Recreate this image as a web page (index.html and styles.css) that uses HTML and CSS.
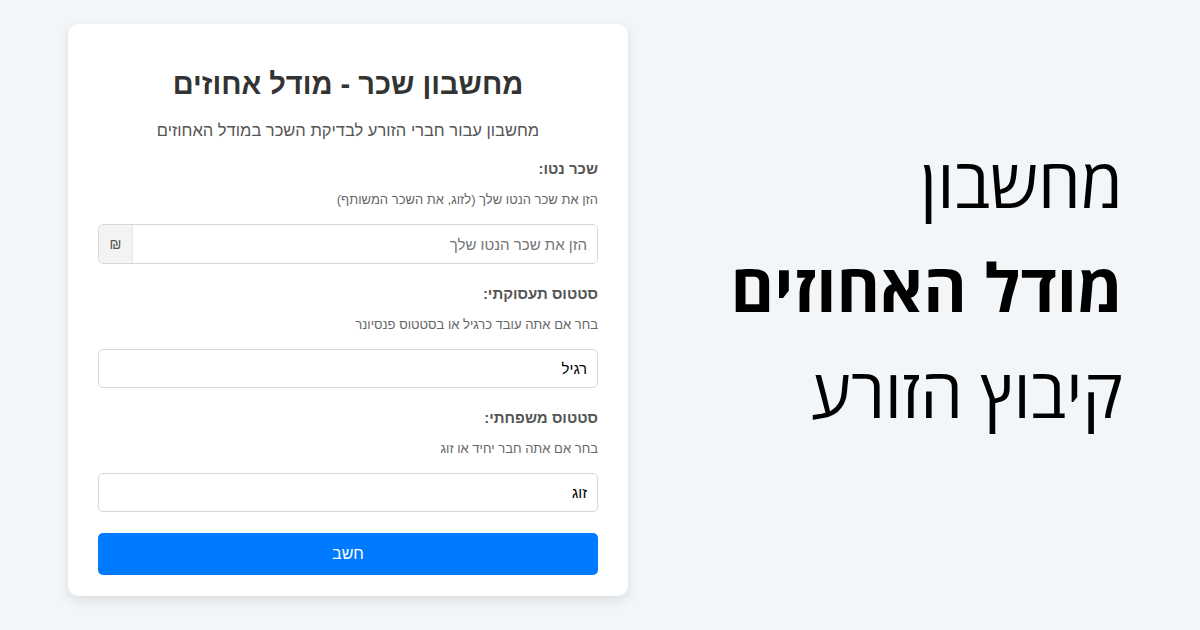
FILE: index.html
```html
<!DOCTYPE html>
<html lang="he">
<head>
<meta charset="utf-8">
<link rel="stylesheet" href="styles.css">
</head>
<body>
<div class="page">
  <div class="card" dir="rtl">
    <h1 class="title">מחשבון שכר - מודל אחוזים</h1>
    <p class="subtitle">מחשבון עבור חברי הזורע לבדיקת השכר במודל האחוזים</p>
    <div class="group">
      <div class="label">שכר נטו:</div>
      <div class="help">הזן את שכר הנטו שלך (לזוג, את השכר המשותף)</div>
      <div class="input-wrap">
        <input class="input" type="text" placeholder="הזן את שכר הנטו שלך">
        <span class="addon">₪</span>
      </div>
    </div>
    <div class="group">
      <div class="label">סטטוס תעסוקתי:</div>
      <div class="help">בחר אם אתה עובד כרגיל או בסטטוס פנסיונר</div>
      <div class="select">רגיל</div>
    </div>
    <div class="group">
      <div class="label">סטטוס משפחתי:</div>
      <div class="help">בחר אם אתה חבר יחיד או זוג</div>
      <div class="select">זוג</div>
    </div>
    <button class="btn">חשב</button>
  </div>
  <div class="hero" dir="rtl">
    <div class="hero-line">מחשבון</div>
    <div class="hero-line bold">מודל האחוזים</div>
    <div class="hero-line">קיבוץ הזורע</div>
  </div>
</div>
</body>
</html>
```
FILE: styles.css
```css
* { box-sizing: border-box; }
html, body { margin: 0; padding: 0; }
body {
  width: 1200px;
  height: 630px;
  background: #f3f6f9;
  overflow: hidden;
  font-family: "Liberation Sans", Arial, sans-serif;
}
.page {
  display: flex;
  justify-content: space-between;
  align-items: flex-start;
  padding: 24px 77px 0 68px;
}
.card {
  width: 560px;
  background: #fff;
  border-radius: 10px;
  box-shadow: 0 4px 12px rgba(0,0,0,0.1);
  padding: 30px 30px 21px;
}
.title {
  margin: 13px 0 18px;
  font-size: 29px;
  line-height: 34px;
  font-weight: bold;
  color: #333;
  text-align: center;
}
.subtitle {
  margin: 0 0 18px;
  font-size: 16.5px;
  line-height: 22px;
  color: #555;
  text-align: center;
}
.group { margin-bottom: 20px; }
.label {
  font-size: 15px;
  line-height: 20px;
  font-weight: bold;
  color: #555;
  margin-bottom: 12px;
}
.help {
  font-size: 13px;
  line-height: 18px;
  color: #666;
  margin-bottom: 15px;
}
.input-wrap {
  display: flex;
  height: 40px;
  border: 1px solid #d8d8d8;
  border-radius: 5px;
  overflow: hidden;
}
.input {
  flex: 1;
  border: none;
  outline: none;
  padding: 0 10px;
  font-family: inherit;
  font-size: 15px;
  background: #fff;
}
.input::placeholder { color: #757575; }
.addon {
  width: 34px;
  display: flex;
  align-items: center;
  justify-content: center;
  background: #f3f3f3;
  color: #555;
  font-size: 14px;
  border-right: 1px solid #e6e6e6;
}
.select {
  height: 39px;
  border: 1px solid #d8d8d8;
  border-radius: 5px;
  display: flex;
  align-items: center;
  padding: 0 10px;
  font-size: 15px;
  color: #000;
}
.btn {
  display: block;
  width: 100%;
  height: 42px;
  margin-top: 21px;
  border: none;
  border-radius: 5px;
  background: #007bff;
  color: #fff;
  font-family: inherit;
  font-size: 16px;
}
.hero {
  padding-top: 105px;
  font-family: "Open Sans", sans-serif;
  color: #000;
  text-align: right;
}
.hero-line {
  font-size: 68px;
  line-height: 105px;
}
.hero-line.bold {
  font-weight: 700;
  font-size: 66.5px;
}
```
